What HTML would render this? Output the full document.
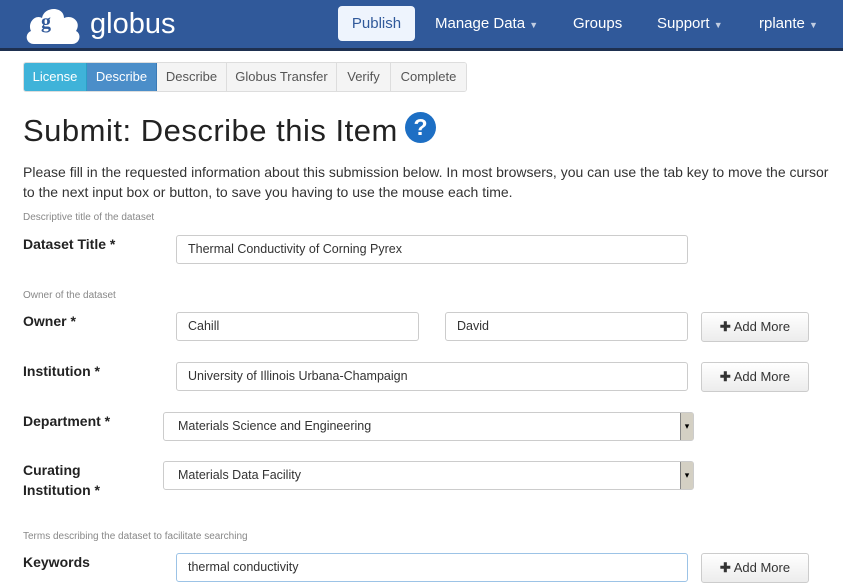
<!DOCTYPE html>
<html><head><style>
*{box-sizing:border-box}
body{margin:0;width:843px;height:572px;overflow:hidden;background:#fff;font-family:"Liberation Sans",sans-serif;color:#333;position:relative}
.a{position:absolute}
.nav{left:0;top:0;width:843px;height:51px;background:#30599a;border-bottom:3px solid #1e3050}
.nl{color:#fff;font-size:15px;top:15px}
.pub{left:338px;top:6px;width:77px;height:35px;background:#eef4fd;border-radius:4px;color:#30599a;font-size:15px;text-align:center;line-height:35px}
.tabs{left:23px;top:62px;width:444px;height:30px;display:flex;border:1px solid #ddd;border-radius:3px;overflow:hidden}
.tabs div{font-size:13px;line-height:28px;color:#555;background:#f4f4f4;border-right:1px solid #ddd;text-align:center}
.lbl{font-size:14px;font-weight:bold;color:#222;left:23px;line-height:20px}
.hint{font-size:10px;color:#888;left:23px}
.in{height:29px;border:1px solid #ccc;border-radius:3px;font-size:12.5px;line-height:27px;padding-left:11px;color:#333;background:#fff}
.btn{width:108px;height:30px;border:1px solid #ccc;border-radius:3px;background:linear-gradient(#fff,#ececec);font-size:13px;line-height:28px;text-align:center;color:#333}
.sel{height:29px;border:1px solid #ccc;border-radius:3px;font-size:12.5px;line-height:27px;padding-left:14px}
.sel:after{content:"▾";position:absolute;right:0;top:0;width:12px;height:27px;background:#d4d0c4;border-left:1px solid #888;font-size:9px;line-height:27px;text-align:center;color:#000}
</style></head><body>
<div class="a nav"></div>
<svg class="a" style="left:24px;top:4px" width="60" height="42" viewBox="0 0 60 42"><path d="M10 40 C2 40 0 30 7 27 C3 18 12 10 18 14 C20 2 40 2 40 14 C48 10 58 18 52 27 C58 30 56 40 48 40 Z" fill="#fff"/><text x="17" y="24" font-size="20" fill="#30599a" font-family="Liberation Serif" font-weight="bold">g</text></svg>
<div class="a" style="left:90px;top:8px;color:#fff;font-size:29px">globus</div>
<div class="a pub">Publish</div>
<div class="a nl" style="left:435px">Manage Data <span style="font-size:9px;opacity:.7">▼</span></div>
<div class="a nl" style="left:573px">Groups</div>
<div class="a nl" style="left:657px">Support <span style="font-size:9px;opacity:.7">▼</span></div>
<div class="a nl" style="left:759px">rplante <span style="font-size:9px;opacity:.7">▼</span></div>
<div class="a tabs"><div style="width:63px;background:#3fb3d9;color:#fff;border-color:#2a9fc6">License</div><div style="width:70px;background:#4b8ec9;color:#fff;border-color:#3a7ab5">Describe</div><div style="width:70px">Describe</div><div style="width:110px">Globus Transfer</div><div style="width:54px">Verify</div><div style="width:75px;border:0">Complete</div></div>
<div class="a" style="left:23px;top:113px;font-size:31px;color:#222;letter-spacing:.5px">Submit: Describe this Item</div>
<div class="a" style="left:405px;top:112px;width:31px;height:31px;border-radius:50%;background:#1d6fc4;color:#fff;font-weight:bold;font-size:23px;text-align:center;line-height:31px">?</div>
<div class="a" style="left:23px;top:162px;font-size:14px;line-height:20px;width:820px;color:#333">Please fill in the requested information about this submission below. In most browsers, you can use the tab key to move the cursor to the next input box or button, to save you having to use the mouse each time.</div>
<div class="a hint" style="top:212px">Descriptive title of the dataset</div>
<div class="a lbl" style="top:234px">Dataset Title *</div>
<div class="a in" style="left:176px;top:235px;width:512px">Thermal Conductivity of Corning Pyrex</div>
<div class="a hint" style="top:290px">Owner of the dataset</div>
<div class="a lbl" style="top:311px">Owner *</div>
<div class="a in" style="left:176px;top:312px;width:243px">Cahill</div>
<div class="a in" style="left:445px;top:312px;width:243px">David</div>
<div class="a btn" style="left:701px;top:312px"><b>✚</b> Add More</div>
<div class="a lbl" style="top:361px">Institution *</div>
<div class="a in" style="left:176px;top:362px;width:512px">University of Illinois Urbana-Champaign</div>
<div class="a btn" style="left:701px;top:362px"><b>✚</b> Add More</div>
<div class="a lbl" style="top:411px">Department *</div>
<div class="a sel" style="left:163px;top:412px;width:531px">Materials Science and Engineering</div>
<div class="a lbl" style="top:460px">Curating<br>Institution *</div>
<div class="a sel" style="left:163px;top:461px;width:531px">Materials Data Facility</div>
<div class="a hint" style="top:531px">Terms describing the dataset to facilitate searching</div>
<div class="a lbl" style="top:552px">Keywords</div>
<div class="a in" style="left:176px;top:553px;width:512px;border-color:#9cc3e6">thermal conductivity</div>
<div class="a btn" style="left:701px;top:553px"><b>✚</b> Add More</div>
</body></html>
